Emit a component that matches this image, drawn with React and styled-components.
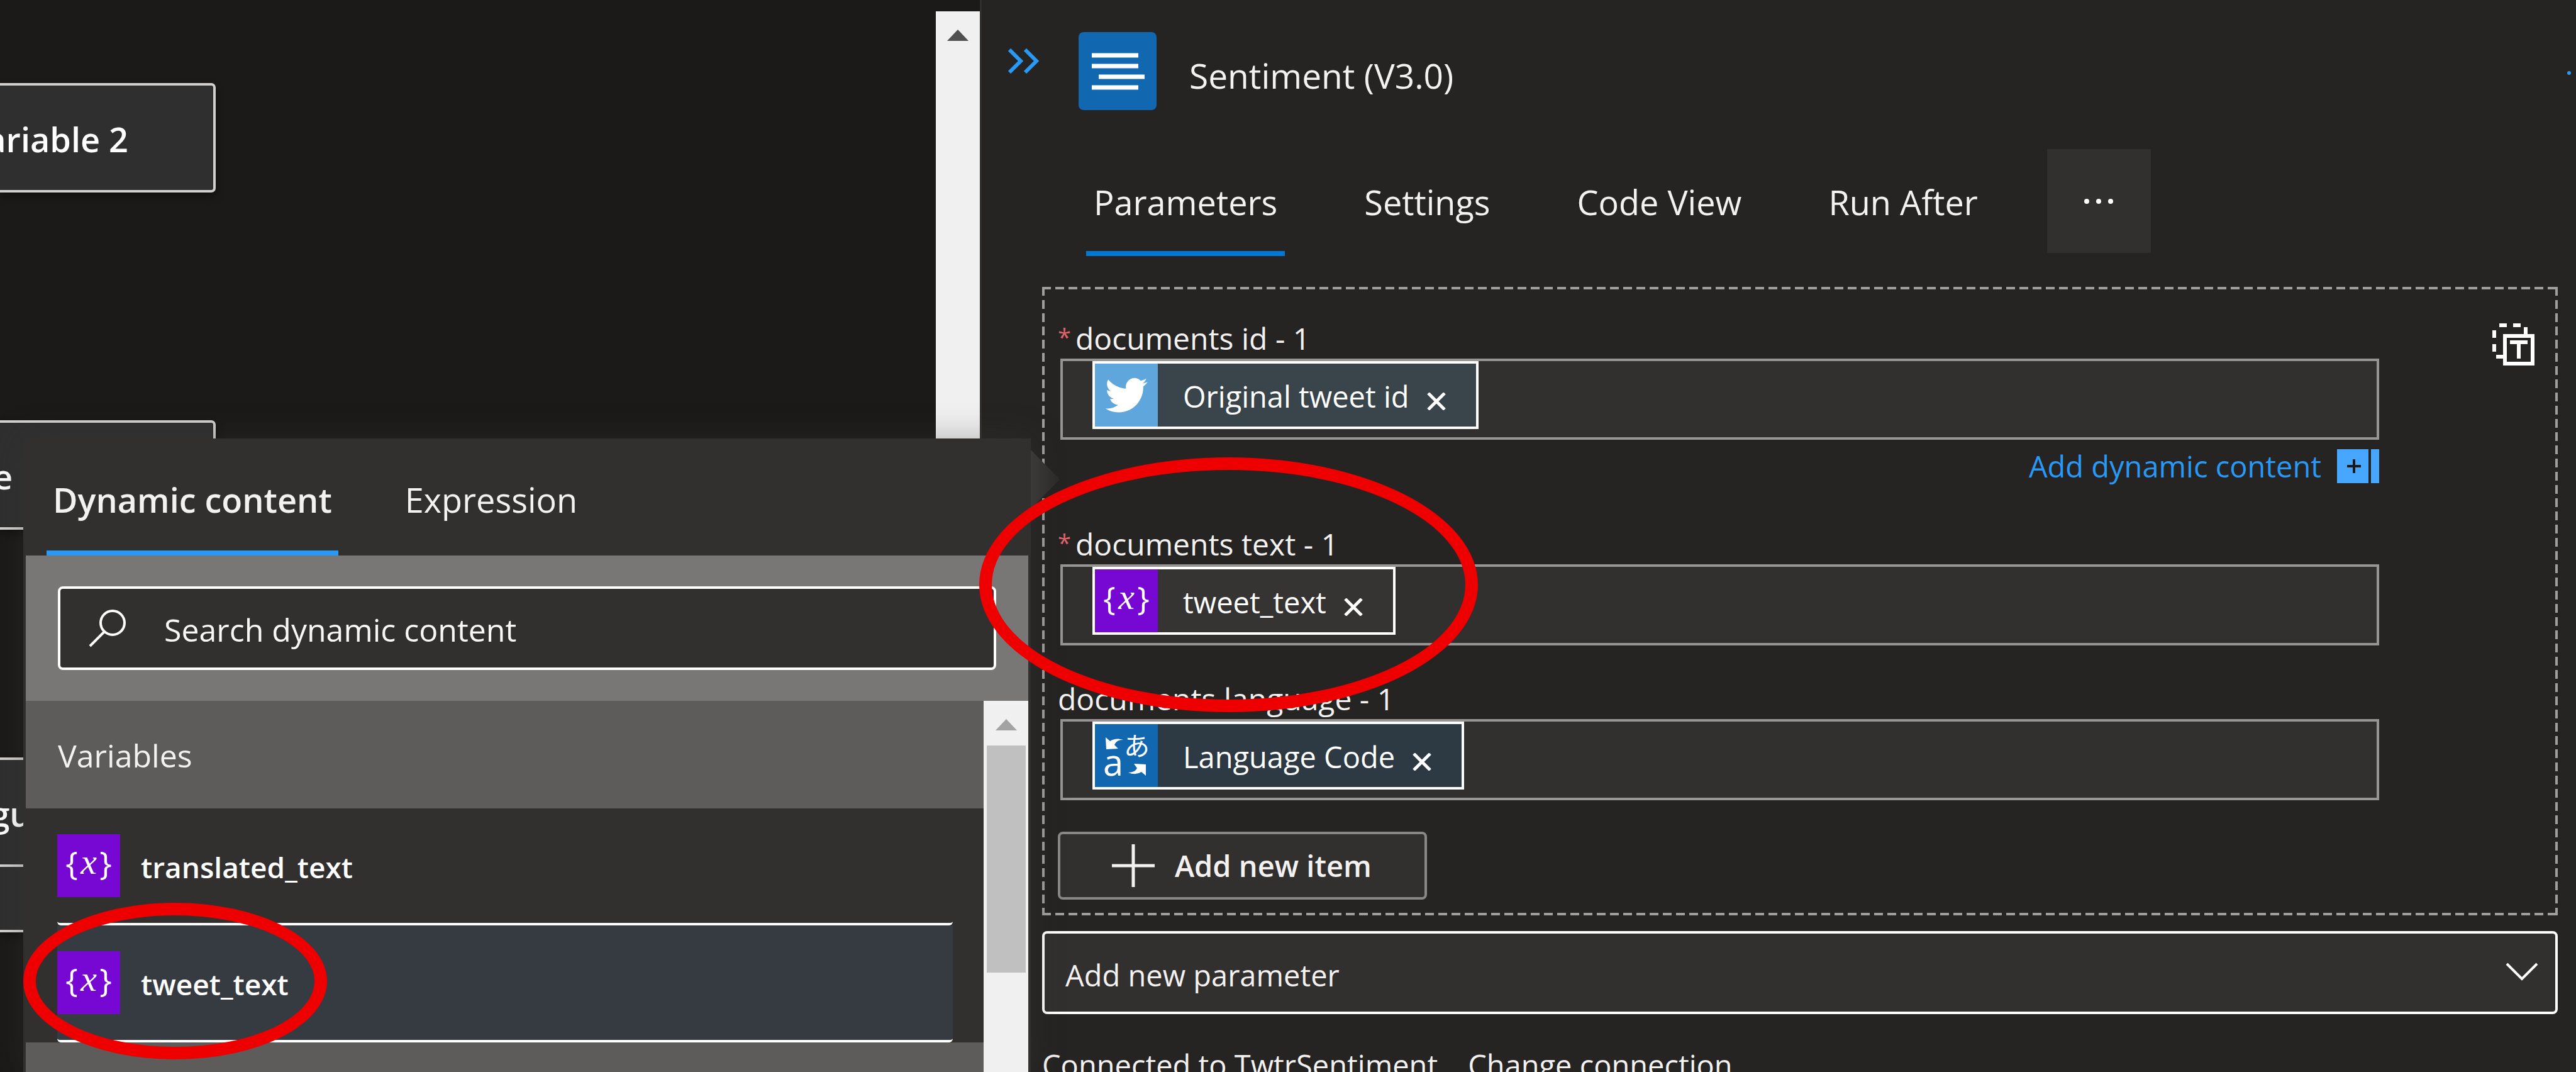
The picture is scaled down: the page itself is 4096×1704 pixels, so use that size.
import React, { useState } from "react";
import styled, { createGlobalStyle } from "styled-components";

const GlobalStyle = createGlobalStyle`
  *, *::before, *::after { box-sizing: border-box; }
  html, body { margin: 0; height: 100%; }
  body {
    background: #252423;
    color: #f3f2f1;
    font-family: "Open Sans", "Noto Sans", sans-serif;
    font-size: 47px;
  }
  button, input, select { font: inherit; color: inherit; margin: 0; border-radius: 0; }
  button { background: none; border: 0; padding: 0; cursor: pointer; }
`;

const Page = styled.div`
  position: relative;
  display: grid;
  grid-template-columns: 1558px 1fr;
  height: 100vh;
  overflow: hidden;
`;

/* ---------- designer canvas ---------- */

const Canvas = styled.main`
  display: flex;
  justify-content: space-between;
  background: #1b1a19;
  min-height: 0;
  overflow: hidden;
`;

const NodeList = styled.div`
  display: flex;
  flex-direction: column;
  gap: 362px;
  width: 343px;
  padding-top: 132px;
`;

const Node = styled.div`
  flex: none;
  border: 4px solid #d2d0ce;
  border-left: 0;
  border-radius: 0 7px 7px 0;
  background: #2f2f2f;
  box-shadow: 0 6px 14px rgba(0, 0, 0, 0.4);
`;

const NodeTitle = styled.div`
  display: flex;
  justify-content: flex-end;
  height: 166px;
  padding-right: ${(p) => p.$inset}px;
  overflow: hidden;
  color: #fff;
  font-size: 54px;
  font-weight: 600;
  line-height: 170px;
  white-space: nowrap;
`;

const NodeFooter = styled.div`
  height: 104px;
  border-top: 4px solid #d2d0ce;
`;

const Track = styled.div`
  flex: none;
  display: flex;
  flex-direction: column;
  align-items: center;
  width: ${(p) => p.$width}px;
  margin-top: ${(p) => p.$top || 0}px;
  padding-top: 29px;
  background: #f0f0f0;
`;

const Thumb = styled.div`
  width: 62px;
  height: 361px;
  margin-top: 24px;
  background: #c0c0c0;
`;

/* ---------- details panel ---------- */

const Panel = styled.aside`
  min-width: 0;
  padding: 51px 29px 0 42px;
  border-left: 3px solid #31302f;
  background: #252423;
`;

const PanelHeader = styled.header`
  display: flex;
  align-items: center;
  height: 124px;
  margin-bottom: 62px;
`;

const CollapseButton = styled.button`
  align-self: flex-start;
  margin: 26px 63px 0 0;
  svg { display: block; }
`;

const ConnectorIcon = styled.div`
  width: 124px;
  height: 124px;
  border-radius: 8px;
  background: #1267b1;
  overflow: hidden;
`;

const Title = styled.h1`
  flex: 1;
  margin: 0;
  padding: 14px 0 0 52px;
  font-size: 55px;
  font-weight: 400;
  line-height: 72px;
`;

const OverflowButton = styled.button`
  margin-right: -24px;
  svg { display: block; }
`;

const Tabs = styled.nav`
  display: flex;
  gap: ${(p) => p.$gap}px;
  padding-left: ${(p) => p.$start}px;
`;

const Tab = styled.button`
  height: ${(p) => p.$height}px;
  padding: ${(p) => p.$drop}px ${(p) => p.$pad}px 0;
  border-bottom: 8px solid ${(p) => (p.$active ? p.$accent : "transparent")};
  font-size: 54px;
  font-weight: ${(p) => (p.$strong ? 600 : 400)};
  line-height: 72px;
  white-space: nowrap;
`;

const MoreTab = styled.button`
  display: grid;
  place-items: center;
  width: 165px;
  height: 165px;
  margin-left: -16px;
  background: #31302f;
`;

const PanelBody = styled.div`
  padding-left: 54px;
`;

const DashedGroup = styled.section`
  --h: linear-gradient(90deg, #a19f9d 14px, transparent 14px);
  --v: linear-gradient(180deg, #a19f9d 14px, transparent 14px);
  display: flex;
  justify-content: space-between;
  margin-top: 49px;
  padding: 49px 37px 25px 25px;
  background-image: var(--h), var(--h), var(--v), var(--v);
  background-size: 21px 4px, 21px 4px, 4px 21px, 4px 21px;
  background-position: left top, left bottom, left top, right top;
  background-repeat: repeat-x, repeat-x, repeat-y, repeat-y;
`;

const Fields = styled.div`
  flex: 1;
  margin-right: 180px;
`;

const FieldGroup = styled.div`
  margin-bottom: ${(p) => p.$after}px;
`;

const Label = styled.label`
  display: block;
  height: 65px;
  font-size: 48px;
  line-height: 65px;
`;

const Required = styled.span`
  display: inline-block;
  width: 28px;
  color: #e0626b;
  font-size: 38px;
  line-height: 0;
  vertical-align: 6px;
`;

const Field = styled.div`
  display: flex;
  align-items: flex-start;
  height: 129px;
  margin-left: 4px;
  padding-left: 47px;
  border: 4px solid #979593;
  background: #31302e;
`;

const Token = styled.span`
  flex: none;
  display: flex;
  align-items: center;
  height: 108px;
  padding-right: 48px;
  border: 4px solid #fff;
  background: ${(p) => p.$tint};
  color: #fff;
  white-space: nowrap;
`;

const TokenText = styled.span`
  padding: 4px 28px 0 40px;
`;

const RemoveButton = styled.button`
  padding-top: 20px;
  svg { display: block; }
`;

const TokenInput = styled.input`
  flex: 1;
  min-width: 0;
  height: 100%;
  border: 0;
  outline: 0;
  background: transparent;
`;

const DynamicLink = styled.a`
  display: flex;
  justify-content: flex-end;
  align-items: center;
  gap: 25px;
  height: 54px;
  margin-top: 15px;
  color: #2899f5;
  line-height: 54px;
  text-decoration: none;
`;

const AddItemButton = styled.button`
  display: flex;
  align-items: center;
  gap: 32px;
  height: 108px;
  padding: 0 84px 0 82px;
  border: 4px solid #8a8886;
  border-radius: 8px;
  background: #31302e;
  font-weight: 600;
  line-height: 72px;
`;

const CopyButton = styled.button`
  align-self: flex-start;
  padding-top: 9px;
  svg { display: block; }
`;

const SelectWrap = styled.div`
  position: relative;
  margin-top: 25px;
  svg {
    position: absolute;
    right: 31px;
    top: 50px;
    pointer-events: none;
  }
`;

const Select = styled.select`
  appearance: none;
  display: block;
  width: 100%;
  height: 132px;
  padding: 8px 33px 0;
  border: 4px solid #fff;
  border-radius: 8px;
  background: #31302e;
`;

const Connection = styled.p`
  display: flex;
  gap: 48px;
  margin: 49px 0 0;
  line-height: 64px;
  white-space: nowrap;
  a { color: inherit; text-decoration: none; }
`;

/* ---------- dynamic content flyout ---------- */

const Flyout = styled.section`
  position: absolute;
  left: 37px;
  top: 697px;
  bottom: 0;
  display: flex;
  flex-direction: column;
  width: 1602px;
  border: solid #31302e;
  border-width: 0 4px;
  background: #31302e;
  box-shadow: 0 0 48px rgba(60, 58, 56, 0.35);
`;

const Beak = styled.div`
  position: absolute;
  left: 1598px;
  top: 18px;
  width: 46px;
  height: 94px;
  background: linear-gradient(90deg, #3b3a38, #2b2a29);
  clip-path: polygon(0 0, 100% 50%, 0 100%);
`;

const SearchBand = styled.div`
  padding: 49px 51px;
  background: #797775;
`;

const SearchBox = styled.label`
  display: flex;
  align-items: center;
  gap: 60px;
  height: 133px;
  padding-left: 45px;
  border: 4px solid #fff;
  border-radius: 8px;
  background: #31302e;
`;

const SearchInput = styled.input`
  flex: 1;
  min-width: 0;
  height: 72px;
  padding: 4px 0 0;
  border: 0;
  outline: 0;
  background: transparent;
  font-size: 50px;
  &::placeholder { color: #f8f7f6; opacity: 1; }
`;

const ListArea = styled.div`
  flex: 1;
  display: flex;
  min-height: 0;
`;

const List = styled.div`
  flex: 1;
  overflow: hidden;
`;

const GroupHeading = styled.h2`
  height: 171px;
  margin: 0;
  padding-left: 51px;
  background: #5d5c5a;
  font-size: 50px;
  font-weight: 400;
  line-height: 175px;
`;

const Option = styled.button`
  display: flex;
  align-items: center;
  gap: 33px;
  width: 1424px;
  height: 186px;
  margin-left: 50px;
  border-bottom: 4px solid #fff;
  border-radius: 0 0 6px 6px;
  background: ${(p) => (p.$active ? "#353b41" : "transparent")};
  color: #fff;
  font-size: 46px;
  font-weight: 600;
  text-align: left;
`;

const OptionText = styled.span`
  padding-top: 4px;
`;

const Ring = styled.div`
  position: absolute;
  left: ${(p) => p.$x}px;
  top: ${(p) => p.$y}px;
  width: ${(p) => p.$w}px;
  height: ${(p) => p.$h}px;
  border: 20px solid #ee0000;
  border-radius: 50%;
  pointer-events: none;
`;

const Tile = styled.svg`
  flex: none;
  display: block;
  width: 100px;
  height: 100px;
`;

/* ---------- icons ---------- */

const VariableIcon = () => (
  <Tile viewBox="0 0 100 100" aria-hidden="true">
    <rect width="100" height="100" fill="#7708d4" />
    <g fill="#fff" textAnchor="middle" fontWeight="400">
      <text x="23" y="65" fontFamily="Open Sans, sans-serif" fontSize="52">{"{"}</text>
      <text x="50" y="63" fontFamily="Liberation Serif, serif" fontStyle="italic" fontSize="58">x</text>
      <text x="77" y="65" fontFamily="Open Sans, sans-serif" fontSize="52">{"}"}</text>
    </g>
  </Tile>
);

const TwitterIcon = () => (
  <Tile viewBox="0 0 100 100" aria-hidden="true">
    <rect width="100" height="100" fill="#5ea6dc" />
    <path
      fill="#fff"
      transform="translate(16.5 16.5) scale(2.8)"
      d="M23.95 4.57a10 10 0 0 1-2.82.77 4.96 4.96 0 0 0 2.16-2.72c-.95.55-2 .96-3.13 1.18a4.92 4.92 0 0 0-8.38 4.48C7.69 8.1 4.07 6.13 1.64 3.16a4.82 4.82 0 0 0-.67 2.48c0 1.71.87 3.21 2.19 4.1a4.9 4.9 0 0 1-2.23-.62v.06a4.92 4.92 0 0 0 3.95 4.83 5 5 0 0 1-2.21.08 4.94 4.94 0 0 0 4.6 3.42A9.87 9.87 0 0 1 0 19.54a13.99 13.99 0 0 0 7.55 2.21c9.05 0 14-7.5 14-13.98 0-.21 0-.42-.02-.63a9.94 9.94 0 0 0 2.46-2.55z"
    />
  </Tile>
);

const TranslateIcon = () => (
  <Tile viewBox="0 0 100 100" aria-hidden="true">
    <rect width="100" height="100" fill="#1267b1" />
    <g fill="#fff">
      <path d="M17 21 24 27Q33 21 45 25Q34 25 31 33L37 39 18 40Z" />
      <path d="M81 82 74 76Q65 82 53 77Q64 77 67 70L62 63 81 64Z" />
      <text x="66.5" y="50" textAnchor="middle" fontFamily="Noto Sans CJK JP, sans-serif" fontSize="41">あ</text>
      <text x="29" y="82" textAnchor="middle" fontFamily="Open Sans, sans-serif" fontSize="58">a</text>
    </g>
  </Tile>
);

const LinesIcon = () => (
  <svg width="124" height="124" viewBox="0 0 124 124" aria-hidden="true">
    <path d="M21 37H95M21 54H95M32 71H105M21 88H95" stroke="#fff" strokeWidth="7" />
  </svg>
);

const ChevronsIcon = () => (
  <svg width="49" height="40" viewBox="0 0 49 40" fill="none" stroke="#2899f5" strokeWidth="6" aria-hidden="true">
    <path d="M2 2 20 20 2 38M27 2 45 20 27 38" />
  </svg>
);

const DotsIcon = ({ color }) => (
  <svg width="48" height="10" viewBox="0 0 48 10" fill={color} aria-hidden="true">
    <circle cx="5" cy="5" r="4" />
    <circle cx="24" cy="5" r="4" />
    <circle cx="43" cy="5" r="4" />
  </svg>
);

const ArrowUp = ({ color }) => (
  <svg width="34" height="18" viewBox="0 0 34 18" aria-hidden="true">
    <path d="M0 18 17 0 34 18Z" fill={color} />
  </svg>
);

const CloseIcon = () => (
  <svg width="30" height="28" viewBox="0 0 30 28" stroke="#fff" strokeWidth="5" aria-hidden="true">
    <path d="M2 1 28 27M28 1 2 27" />
  </svg>
);

const SearchIcon = () => (
  <svg width="60" height="60" viewBox="0 0 60 60" fill="none" stroke="#fff" strokeWidth="4" aria-hidden="true">
    <circle cx="38" cy="21" r="19" />
    <path d="M25 35 2 58" />
  </svg>
);

const PlusIcon = () => (
  <svg width="68" height="68" viewBox="0 0 68 68" stroke="#f3f2f1" strokeWidth="5" aria-hidden="true">
    <path d="M34 0V68M0 34H68" />
  </svg>
);

const AddContentIcon = () => (
  <svg width="67" height="54" viewBox="0 0 67 54" aria-hidden="true">
    <path d="M0 0H50V54H0ZM54 0H67V54H54Z" fill="#47a7ff" />
    <path d="M27 16V38M16 27H38" stroke="#1b1a19" strokeWidth="4" />
  </svg>
);

const CopyIcon = () => (
  <svg width="67" height="67" viewBox="0 0 67 67" fill="none" stroke="#fff" strokeWidth="6" aria-hidden="true">
    <path d="M11 3H23M33 3H45M3 11V23M3 33V45M53 6V18M6 53H18" />
    <path d="M20 20H64V64H20Z" />
    <path d="M28 30H56M42 30V56" />
  </svg>
);

const ChevronDown = () => (
  <svg width="52" height="30" viewBox="0 0 52 30" fill="none" stroke="#fff" strokeWidth="4" aria-hidden="true">
    <path d="M2 2 26 26 50 2" />
  </svg>
);

const fields = [
  { id: "doc-id", label: "documents id - 1", required: true, token: "Original tweet id", tint: "#3a444b", Icon: TwitterIcon, link: true, after: 64 },
  { id: "doc-text", label: "documents text - 1", required: true, token: "tweet_text", tint: "#353433", Icon: VariableIcon, after: 52 },
  { id: "doc-language", label: "documents language - 1", token: "Language Code", tint: "#2d3943", Icon: TranslateIcon, after: 50 },
];

const tabs = ["Parameters", "Settings", "Code View", "Run After"];

export default function App() {
  const [tab, setTab] = useState("Parameters");
  const [source, setSource] = useState("Dynamic content");
  const [choice, setChoice] = useState("tweet_text");

  return (
    <Page>
      <GlobalStyle />
      <Canvas>
        <NodeList>
          <Node><NodeTitle $inset={135}>variable 2</NodeTitle></Node>
          <Node><NodeTitle $inset={319}>le</NodeTitle></Node>
          <Node>
            <NodeTitle $inset={197}>language</NodeTitle>
            <NodeFooter />
          </Node>
        </NodeList>
        <Track $width={70} $top={18}><ArrowUp color="#505050" /></Track>
      </Canvas>

      <Panel>
        <PanelHeader>
          <CollapseButton aria-label="Collapse"><ChevronsIcon /></CollapseButton>
          <ConnectorIcon><LinesIcon /></ConnectorIcon>
          <Title>Sentiment (V3.0)</Title>
          <OverflowButton aria-label="More commands">
            <svg width="12" height="12" viewBox="0 0 12 12" aria-hidden="true">
              <circle cx="6" cy="9" r="3" fill="#2899f5" />
            </svg>
          </OverflowButton>
        </PanelHeader>

        <Tabs $gap={114} $start={124}>
          {tabs.map((name) => (
            <Tab key={name} $height={170} $pad={12} $drop={6} $accent="#0078d4" $active={tab === name} onClick={() => setTab(name)}>
              {name}
            </Tab>
          ))}
          <MoreTab aria-label="More tabs"><DotsIcon color="#fff" /></MoreTab>
        </Tabs>

        <PanelBody>
          <DashedGroup>
            <Fields>
              {fields.map(({ id, label, required, token, tint, Icon, link, after }) => (
                <FieldGroup key={id} $after={after}>
                  <Label htmlFor={id}>
                    {required && <Required>*</Required>}
                    {label}
                  </Label>
                  <Field>
                    <Token $tint={tint}>
                      <Icon />
                      <TokenText>{token}</TokenText>
                      <RemoveButton aria-label={`Remove ${token}`}><CloseIcon /></RemoveButton>
                    </Token>
                    <TokenInput id={id} />
                  </Field>
                  {link && (
                    <DynamicLink href="#dynamic">
                      Add dynamic content
                      <AddContentIcon />
                    </DynamicLink>
                  )}
                </FieldGroup>
              ))}
              <AddItemButton><PlusIcon />Add new item</AddItemButton>
            </Fields>
            <CopyButton aria-label="Switch to input entire array"><CopyIcon /></CopyButton>
          </DashedGroup>

          <SelectWrap>
            <Select aria-label="Add new parameter" defaultValue="none">
              <option value="none">Add new parameter</option>
            </Select>
            <ChevronDown />
          </SelectWrap>

          <Connection>
            <span>Connected to TwtrSentiment</span>
            <a href="#connection">Change connection.</a>
          </Connection>
        </PanelBody>
      </Panel>

      <Flyout id="dynamic">
        <Beak />
        <Tabs $gap={96} $start={33}>
          {["Dynamic content", "Expression"].map((name) => (
            <Tab key={name} $height={186} $pad={10} $drop={16} $accent="#2899f5" $active={source === name} $strong={source === name} onClick={() => setSource(name)}>
              {name}
            </Tab>
          ))}
        </Tabs>
        <SearchBand>
          <SearchBox>
            <SearchIcon />
            <SearchInput placeholder="Search dynamic content" />
          </SearchBox>
        </SearchBand>
        <ListArea>
          <List>
            <GroupHeading>Variables</GroupHeading>
            {["translated_text", "tweet_text"].map((name) => (
              <Option key={name} $active={choice === name} onClick={() => setChoice(name)}>
                <VariableIcon />
                <OptionText>{name}</OptionText>
              </Option>
            ))}
            <GroupHeading as="div" />
          </List>
          <Track $width={71}>
            <ArrowUp color="#a3a3a3" />
            <Thumb />
          </Track>
        </ListArea>
      </Flyout>

      <Ring $x={1557} $y={727} $w={793} $h={405} />
      <Ring $x={37} $y={1435} $w={483} $h={249} />
    </Page>
  );
}
